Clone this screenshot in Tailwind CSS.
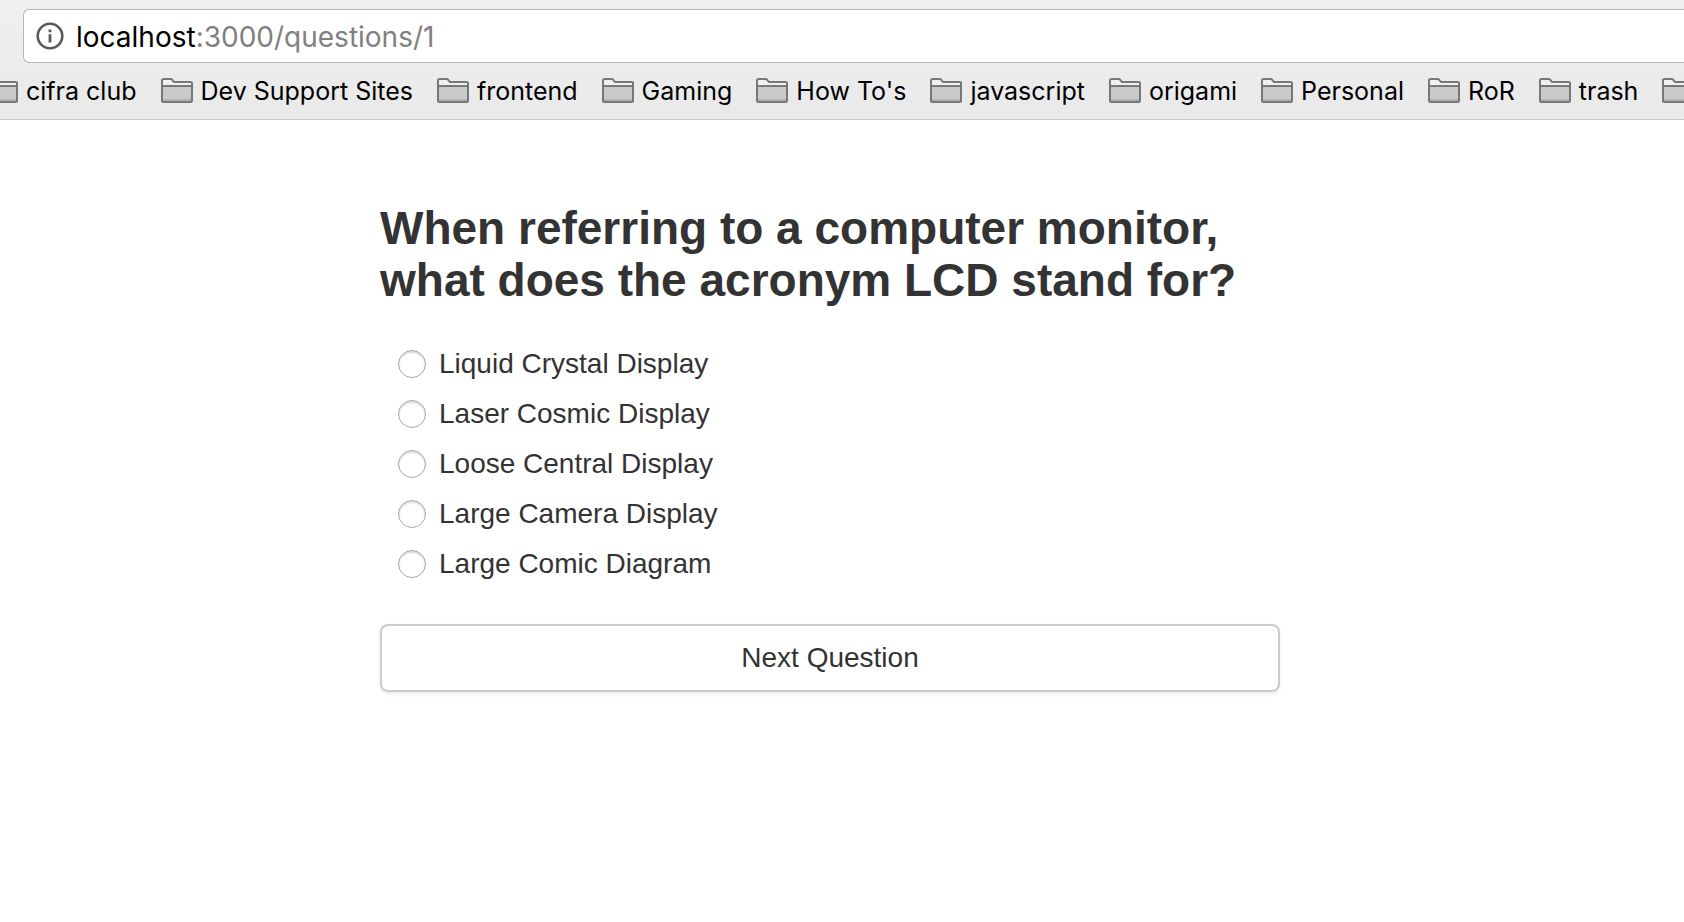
<!DOCTYPE html>
<html lang="en">
<head>
<meta charset="utf-8">
<title>Question 1</title>
<script src="https://cdn.jsdelivr.net/npm/@tailwindcss/browser@4"></script>
</head>
<body class="min-h-screen overflow-x-hidden bg-white font-['Liberation_Sans',sans-serif] text-[#333333]">
<svg class="hidden" aria-hidden="true">
  <symbol id="folder" viewBox="0 0 32 25">
    <path d="M1 8V2.5Q1 1 2.5 1H9.5Q10.5 1 11.3 1.8L13 4H29.5Q31 4 31 5V8Z" fill="#f1f1f1"/>
    <path d="M1 8H31V23H1Z" fill="#c9c9c9"/>
    <path d="M2 21H30V23H2Z" fill="#b3b3b3"/>
    <path d="M1 8H31M1 2.5Q1 1 2.5 1H9.5Q10.5 1 11.3 1.8L13 4H29.5Q31 4 31 5V22.5Q31 24 29.5 24H2.5Q1 24 1 22.5Z" fill="none" stroke="#777777" stroke-width="2"/>
  </symbol>
</svg>
<header class="overflow-hidden border-b border-[#c8c8c8] bg-linear-to-b from-[#f0f0f0] to-[#e9e9e9] pt-[9px] font-[Inter,sans-serif] text-black">
  <div class="ml-[23px] flex h-[54px] items-center gap-3 rounded-l-md border border-r-0 border-[#b5b5b5] bg-white pl-3">
    <svg class="size-7 shrink-0" viewBox="0 0 28 28" fill="none" role="img" aria-label="Site information">
      <circle cx="14" cy="14" r="12.3" stroke="#5a5a5a" stroke-width="2.6"/>
      <path d="M12.6 7.5H15.4V10.3H12.6ZM12.6 12.3H15.4V20.5H12.6Z" fill="#5a5a5a"/>
    </svg>
    <div class="pt-0.5 text-[28px] leading-8">localhost<span class="text-[#808080]">:3000/questions/1</span></div>
  </div>
  <nav aria-label="Bookmarks" class="-ml-[14px] mb-0.5 flex h-[54px] items-center gap-6 text-[25px] leading-8 whitespace-nowrap">
    <a href="#" class="flex shrink-0 items-center gap-2"><svg class="h-[25px] w-8"><use href="#folder"/></svg><span class="pt-0.5">cifra club</span></a>
    <a href="#" class="flex shrink-0 items-center gap-2"><svg class="h-[25px] w-8"><use href="#folder"/></svg><span class="pt-0.5">Dev Support Sites</span></a>
    <a href="#" class="flex shrink-0 items-center gap-2"><svg class="h-[25px] w-8"><use href="#folder"/></svg><span class="pt-0.5">frontend</span></a>
    <a href="#" class="flex shrink-0 items-center gap-2"><svg class="h-[25px] w-8"><use href="#folder"/></svg><span class="pt-0.5">Gaming</span></a>
    <a href="#" class="flex shrink-0 items-center gap-2"><svg class="h-[25px] w-8"><use href="#folder"/></svg><span class="pt-0.5">How To's</span></a>
    <a href="#" class="flex shrink-0 items-center gap-2"><svg class="h-[25px] w-8"><use href="#folder"/></svg><span class="pt-0.5">javascript</span></a>
    <a href="#" class="flex shrink-0 items-center gap-2"><svg class="h-[25px] w-8"><use href="#folder"/></svg><span class="pt-0.5">origami</span></a>
    <a href="#" class="flex shrink-0 items-center gap-2"><svg class="h-[25px] w-8"><use href="#folder"/></svg><span class="pt-0.5">Personal</span></a>
    <a href="#" class="flex shrink-0 items-center gap-2"><svg class="h-[25px] w-8"><use href="#folder"/></svg><span class="pt-0.5">RoR</span></a>
    <a href="#" class="flex shrink-0 items-center gap-2"><svg class="h-[25px] w-8"><use href="#folder"/></svg><span class="pt-0.5">trash</span></a>
    <a href="#" aria-label="More bookmarks" class="flex shrink-0 items-center gap-2"><svg class="h-[25px] w-8"><use href="#folder"/></svg></a>
  </nav>
</header>
<main class="flex justify-center pt-[82px] pr-6">
  <form class="w-full max-w-[900px]">
    <h1 id="question" class="text-[46px] leading-[52px] font-bold">When referring to a computer monitor, what does the acronym LCD stand for?</h1>
    <div role="radiogroup" aria-labelledby="question" class="mt-[42px] flex flex-col gap-[18px] pl-[18px]">
      <label class="flex items-center gap-[13px] text-[28px] leading-8"><input type="radio" name="answer" class="size-7 shrink-0 appearance-none rounded-full border border-[#a8a8a8] bg-white shadow-[inset_0_2px_2px_#dcdcdc] checked:border-8">Liquid Crystal Display</label>
      <label class="flex items-center gap-[13px] text-[28px] leading-8"><input type="radio" name="answer" class="size-7 shrink-0 appearance-none rounded-full border border-[#a8a8a8] bg-white shadow-[inset_0_2px_2px_#dcdcdc] checked:border-8">Laser Cosmic Display</label>
      <label class="flex items-center gap-[13px] text-[28px] leading-8"><input type="radio" name="answer" class="size-7 shrink-0 appearance-none rounded-full border border-[#a8a8a8] bg-white shadow-[inset_0_2px_2px_#dcdcdc] checked:border-8">Loose Central Display</label>
      <label class="flex items-center gap-[13px] text-[28px] leading-8"><input type="radio" name="answer" class="size-7 shrink-0 appearance-none rounded-full border border-[#a8a8a8] bg-white shadow-[inset_0_2px_2px_#dcdcdc] checked:border-8">Large Camera Display</label>
      <label class="flex items-center gap-[13px] text-[28px] leading-8"><input type="radio" name="answer" class="size-7 shrink-0 appearance-none rounded-full border border-[#a8a8a8] bg-white shadow-[inset_0_2px_2px_#dcdcdc] checked:border-8">Large Comic Diagram</label>
    </div>
    <button type="button" class="mt-11 h-[68px] w-full rounded-lg border-2 border-[#cccccc] bg-white text-[28px] leading-8 shadow-[0_2px_4px_rgba(0,0,0,0.08)]">Next Question</button>
  </form>
</main>
</body>
</html>
